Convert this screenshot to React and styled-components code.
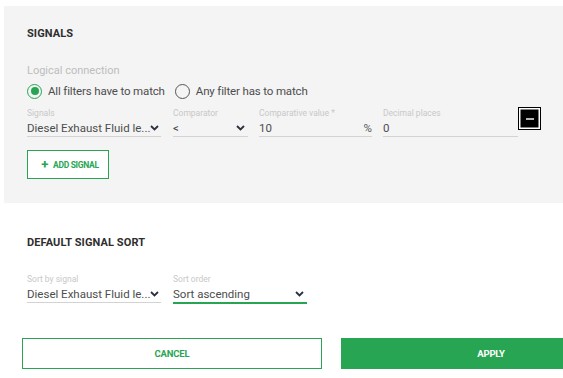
import React from 'react';
import styled, { createGlobalStyle } from 'styled-components';

const GlobalStyle = createGlobalStyle`
  html, body {
    margin: 0;
    padding: 0;
    background: #ffffff;
    overflow: hidden;
  }
  body {
    font-family: Roboto, "Liberation Sans", sans-serif;
  }
`;

const Page = styled.div`
  width: 563px;
  height: 378px;
  padding: 6px 0 0 4px;
  box-sizing: border-box;
  overflow: hidden;
`;

const Panel = styled.section`
  background: #f4f4f4;
  padding: 21px 0 24px 23px;
`;

const Lower = styled.section`
  padding: 33px 0 0 23px;
`;

const Title = styled.h3`
  margin: 0;
  font-size: 11px;
  line-height: 14px;
  font-weight: 700;
  color: #2e2e2e;
  letter-spacing: 0.1px;
`;

const SubLabel = styled.div`
  margin-top: 23px;
  font-size: 11px;
  line-height: 14px;
  color: #bdbdbd;
`;

const RadioRow = styled.div`
  display: flex;
  align-items: center;
  gap: 10px;
  margin-top: 5px;
  height: 16px;
`;

const RadioOption = styled.label`
  display: flex;
  align-items: center;
  gap: 6px;
  font-size: 11.5px;
  letter-spacing: -0.15px;
  color: #4d4d4d;
`;

const RadioCircle = styled.span`
  width: 15px;
  height: 15px;
  box-sizing: border-box;
  border-radius: 50%;
  border: 1.5px solid ${(p) => (p.$checked ? '#27a552' : '#555')};
  display: flex;
  align-items: center;
  justify-content: center;
  &::after {
    content: '';
    width: 8px;
    height: 8px;
    border-radius: 50%;
    background: ${(p) => (p.$checked ? '#27a552' : 'transparent')};
  }
`;

const FieldRow = styled.div`
  display: flex;
  align-items: flex-start;
  gap: ${(p) => p.$gap || 11}px;
  margin-top: ${(p) => p.$top}px;
`;

const Field = styled.div`
  width: ${(p) => p.$w}px;
  display: flex;
  flex-direction: column;
`;

const FieldLabel = styled.div`
  font-size: 8.5px;
  line-height: 10px;
  color: #c8c8c8;
  margin-bottom: 1px;
  white-space: nowrap;
`;

const FieldValue = styled.div`
  display: flex;
  align-items: center;
  justify-content: space-between;
  padding-top: 1px;
  height: 16px;
  font-size: 11.5px;
  color: #4d4d4d;
  border-bottom: ${(p) => (p.$active ? '2px solid #27a552' : '1px solid #d3d3d3')};
  white-space: nowrap;
`;

const Unit = styled.span`
  color: #555;
  font-size: 11.5px;
`;

const Chevron = () => (
  <svg width="9" height="6" viewBox="0 0 9 6" style={{ flexShrink: 0, marginRight: 3 }}>
    <path d="M1 1 L4.5 4.5 L8 1" fill="none" stroke="#2a3140" strokeWidth="1.8" />
  </svg>
);

const RemoveButton = styled.button`
  width: 23px;
  height: 23px;
  margin-top: -1px;
  padding: 0;
  background: #000;
  border: 1px solid #000;
  box-shadow: inset 0 0 0 1.5px #fff;
  display: flex;
  align-items: center;
  justify-content: center;
  cursor: pointer;
  &::after {
    content: '';
    width: 8px;
    height: 2px;
    background: #b5b5b5;
  }
`;

const AddButton = styled.button`
  margin-top: 13px;
  width: 82px;
  height: 29px;
  background: #fff;
  border: 1px solid #27a552;
  color: #27a552;
  font-family: inherit;
  font-weight: 700;
  font-size: 8.5px;
  letter-spacing: -0.3px;
  display: flex;
  align-items: center;
  justify-content: center;
  gap: 5px;
  padding: 0 0 0 4px;
  cursor: pointer;
`;

const Plus = styled.span`
  font-size: 13px;
  font-weight: 700;
  line-height: 1;
`;

const Buttons = styled.div`
  display: flex;
  gap: 19px;
  margin: 34px 0 0 -5px;
`;

const ActionButton = styled.button`
  flex: 0 0 300px;
  height: 31px;
  box-sizing: border-box;
  border: 1px solid #27a552;
  background: ${(p) => (p.$primary ? '#27a552' : '#fff')};
  color: ${(p) => (p.$primary ? '#fff' : '#27a552')};
  font-family: inherit;
  font-weight: 700;
  font-size: 9.5px;
  letter-spacing: -0.2px;
  cursor: pointer;
`;

export default function App() {
  return (
    <>
      <GlobalStyle />
      <Page>
        <Panel>
          <Title>SIGNALS</Title>
          <SubLabel>Logical connection</SubLabel>
          <RadioRow>
            <RadioOption>
              <RadioCircle $checked />
              All filters have to match
            </RadioOption>
            <RadioOption>
              <RadioCircle />
              Any filter has to match
            </RadioOption>
          </RadioRow>
          <FieldRow $top={9}>
            <Field $w={134}>
              <FieldLabel>Signals</FieldLabel>
              <FieldValue>
                Diesel Exhaust Fluid le...
                <Chevron />
              </FieldValue>
            </Field>
            <Field $w={75} style={{ marginLeft: 1 }}>
              <FieldLabel>Comparator</FieldLabel>
              <FieldValue>
                &lt;
                <Chevron />
              </FieldValue>
            </Field>
            <Field $w={113}>
              <FieldLabel>Comparative value *</FieldLabel>
              <FieldValue>
                10
                <Unit>%</Unit>
              </FieldValue>
            </Field>
            <Field $w={135}>
              <FieldLabel>Decimal places</FieldLabel>
              <FieldValue>0</FieldValue>
            </Field>
            <RemoveButton aria-label="Remove signal" style={{ marginLeft: -11 }} />
          </FieldRow>
          <AddButton>
            <Plus>+</Plus>
            ADD SIGNAL
          </AddButton>
        </Panel>
        <Lower>
          <Title>DEFAULT SIGNAL SORT</Title>
          <FieldRow $top={24} $gap={12}>
            <Field $w={134}>
              <FieldLabel>Sort by signal</FieldLabel>
              <FieldValue>
                Diesel Exhaust Fluid le...
                <Chevron />
              </FieldValue>
            </Field>
            <Field $w={134}>
              <FieldLabel>Sort order</FieldLabel>
              <FieldValue $active>
                Sort ascending
                <Chevron />
              </FieldValue>
            </Field>
          </FieldRow>
          <Buttons>
            <ActionButton>CANCEL</ActionButton>
            <ActionButton $primary>APPLY</ActionButton>
          </Buttons>
        </Lower>
      </Page>
    </>
  );
}
